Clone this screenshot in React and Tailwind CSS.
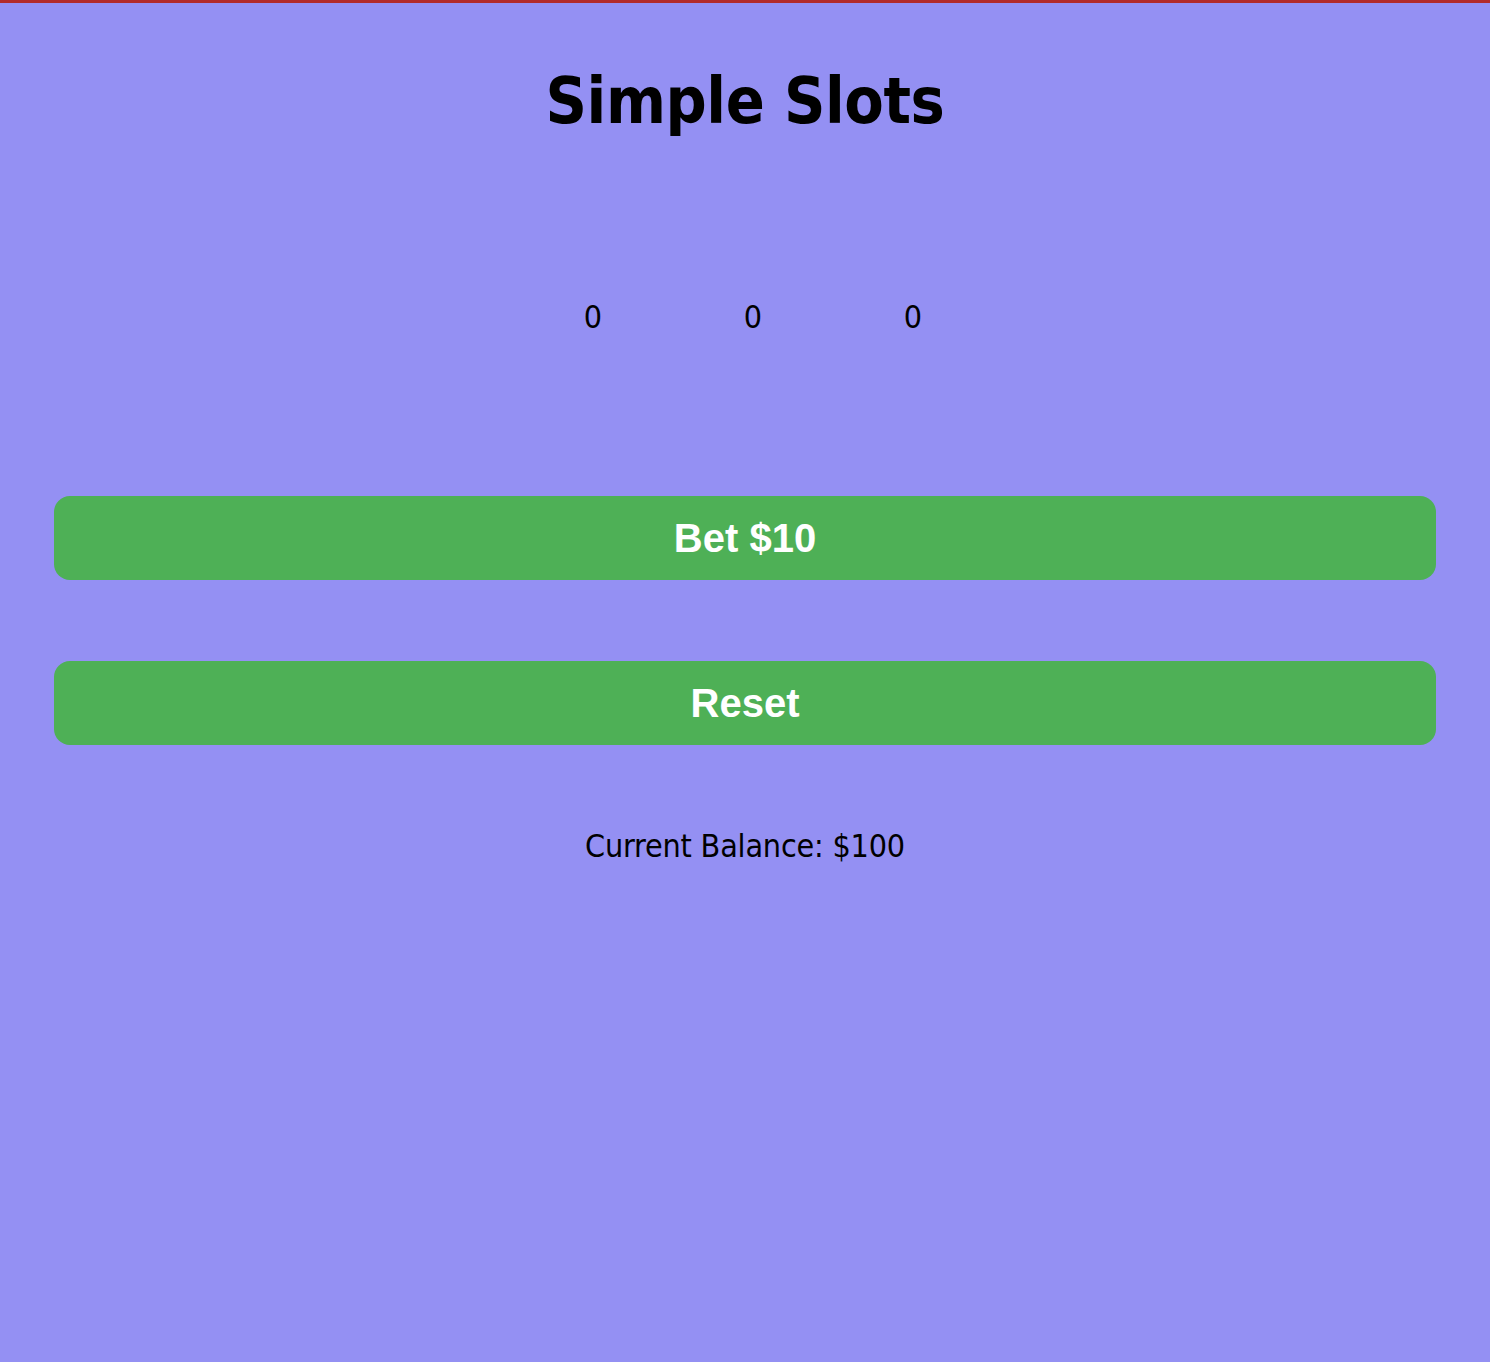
import React, { useState } from "react";

const title = "font-['DejaVu_Sans_Condensed','DejaVu_Sans',sans-serif]";
const btn = "font-['Liberation_Sans',Arial,sans-serif]";

const App = () => {
    const [reels, setReels] = useState([0, 0, 0]);
    const [balance, setBalance] = useState(100);

    const handleBet = () => {
        if (balance < 10) return;
        const next = [0, 1, 2].map(() => Math.floor(Math.random() * 10));
        const win = next[0] === next[1] && next[1] === next[2];
        setReels(next);
        setBalance((b) => b - 10 + (win ? 100 : 0));
    };

    const handleReset = () => {
        setReels([0, 0, 0]);
        setBalance(100);
    };

    return (
        <div className={`min-h-[1362px] bg-[#9490f3] border-t-[3px] border-[#b22a2a] text-black ${title}`}>
            <h1 className="pt-[58px] text-center text-[64px] leading-[80px] font-bold tracking-[-0.4px]">
                Simple Slots
            </h1>
            <div className="mt-[156px] flex justify-center pl-[16px] text-[32px] leading-[40px]">
                {reels.map((r, i) => (
                    <div key={i} className="w-[160px] text-center">
                        {r}
                    </div>
                ))}
            </div>
            <div className="mt-[159px] mx-[54px] flex flex-col gap-[81px]">
                <button
                    type="button"
                    onClick={handleBet}
                    className={`h-[84px] w-full rounded-[16px] bg-[#4eb056] text-white text-[40px] font-bold ${btn}`}
                >
                    Bet $10
                </button>
                <button
                    type="button"
                    onClick={handleReset}
                    className={`h-[84px] w-full rounded-[16px] bg-[#4eb056] text-white text-[40px] font-bold ${btn}`}
                >
                    Reset
                </button>
            </div>
            <p className="mt-[81px] text-center text-[32px] leading-[40px] tracking-[-0.2px]">
                Current Balance: ${balance}
            </p>
        </div>
    );
};

export default App;
